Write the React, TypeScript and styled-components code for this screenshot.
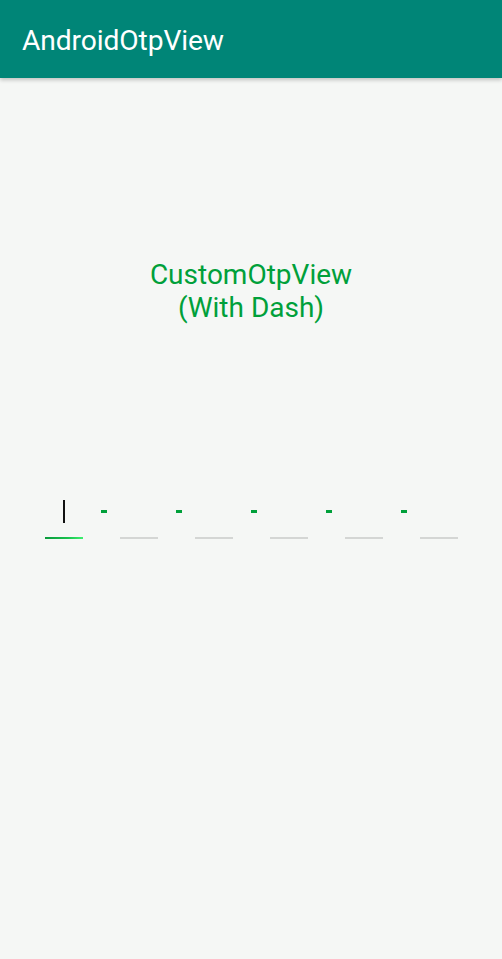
import React from "react";
import styled, { createGlobalStyle } from "styled-components";

const Global = createGlobalStyle`
  html, body { margin: 0; padding: 0; }
  body { background: #f5f7f5; font-family: Roboto, "Noto Sans", sans-serif; }
`;

const Screen = styled.div`
  width: 502px;
  height: 959px;
  display: flex;
  flex-direction: column;
  background: #f5f7f5;
  overflow: hidden;
`;

const AppBar = styled.header`
  height: 78px;
  flex: 0 0 78px;
  background: #008577;
  display: flex;
  align-items: center;
  padding: 0 22px;
  box-shadow: 0 2px 4px rgba(0, 0, 0, 0.22);
  position: relative;
  z-index: 1;
`;

const Title = styled.h1`
  margin: 0;
  margin-top: 2px;
  color: #ffffff;
  font-family: Roboto, sans-serif;
  font-weight: 400;
  font-size: 28.2px;
  letter-spacing: -0.1px;
`;

const Content = styled.main`
  flex: 1;
  display: flex;
  flex-direction: column;
  align-items: center;
  padding-top: 180px;
`;

const Heading = styled.div`
  color: #00a03a;
  font-family: Roboto, sans-serif;
  font-size: 28px;
  line-height: 33px;
  text-align: center;
`;

const OtpRow = styled.div`
  margin-top: 175px;
  display: flex;
  align-items: flex-start;
  padding-left: 1px;
`;

const Box = styled.div`
  width: 38px;
  height: 40px;
  position: relative;
  display: flex;
  justify-content: center;
`;

const Underline = styled.div<{ $active?: boolean }>`
  position: absolute;
  left: 0;
  right: 0;
  bottom: 0;
  height: 2px;
  background: ${(p) =>
    p.$active ? "linear-gradient(90deg, #0a9a3c 0%, #18c24e 60%, #3ef070 100%)" : "#d4d6d4"};
`;

const Cursor = styled.div`
  margin-top: 1px;
  width: 2px;
  height: 23px;
  background: #111;
`;

const Gap = styled.div`
  width: 37px;
  display: flex;
  justify-content: center;
`;

const Dash = styled.div`
  margin-top: 11px;
  margin-left: 4px;
  width: 6px;
  height: 3px;
  background: #00a03a;
`;

export default function App() {
  const boxes = [0, 1, 2, 3, 4, 5];
  return (
    <>
      <Global />
      <Screen>
        <AppBar>
          <Title>AndroidOtpView</Title>
        </AppBar>
        <Content>
          <Heading>
            CustomOtpView
            <br />
            (With Dash)
          </Heading>
          <OtpRow>
            {boxes.map((i) => (
              <React.Fragment key={i}>
                <Box>
                  {i === 0 && <Cursor />}
                  <Underline $active={i === 0} />
                </Box>
                {i < boxes.length - 1 && (
                  <Gap>
                    <Dash />
                  </Gap>
                )}
              </React.Fragment>
            ))}
          </OtpRow>
        </Content>
      </Screen>
    </>
  );
}
